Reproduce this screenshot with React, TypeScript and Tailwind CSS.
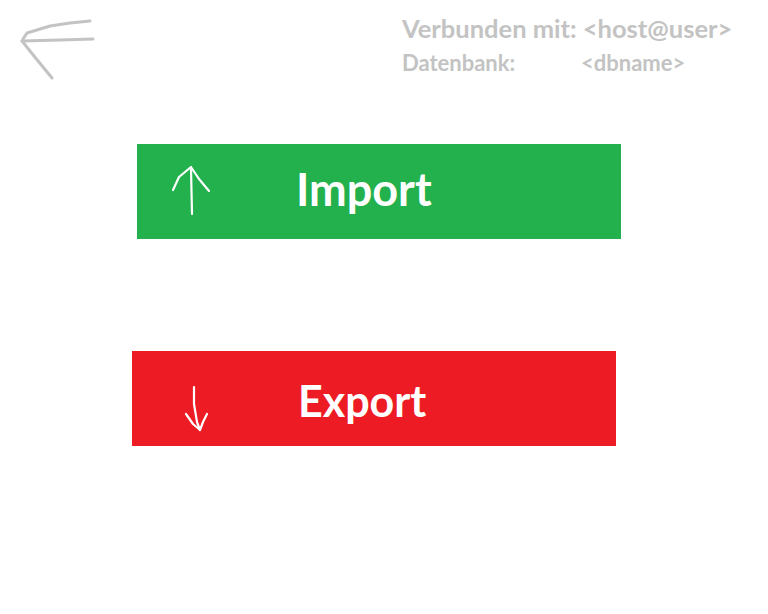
import React from "react";

function BackArrow() {
  return (
    <svg width="100" height="85" viewBox="0 0 100 85" fill="none">
      <g stroke="#c3c3c3" strokeWidth="3" strokeLinecap="round" strokeLinejoin="round">
        <path d="M90 21 L70 23 L50 26 L27 33 L23 39" />
        <path d="M93 39 L60 40 L22 41" />
        <path d="M22 41 L34 56 L52 78" />
      </g>
    </svg>
  );
}

function UpArrow() {
  return (
    <svg width="44" height="54" viewBox="0 0 44 54" fill="none">
      <g stroke="white" strokeWidth="2.2" strokeLinecap="round" strokeLinejoin="round">
        <path d="M20 3 L21 49" />
        <path d="M2 25 L8 12 L20 2 L28 14 L38 26" />
      </g>
    </svg>
  );
}

function DownArrow() {
  return (
    <svg width="30" height="50" viewBox="0 0 30 50" fill="none">
      <g stroke="white" strokeWidth="2.2" strokeLinecap="round" strokeLinejoin="round">
        <path d="M10 3 L10 20 L13 38 L16 46" />
        <path d="M2 30 L9 40 L16 46 L19 38 L23 30" />
      </g>
    </svg>
  );
}

export default function App() {
  return (
    <div
      className="flex h-[614px] w-[768px] flex-col bg-white"
      style={{ fontFamily: "Lato, 'Open Sans', sans-serif" }}
    >
      {/* Header */}
      <div className="flex h-[85px]">
        <BackArrow />
        <div className="ml-[302px] pt-[13px] font-bold text-[#c3c3c3]">
          <p className="text-[25.5px] leading-[30px]">Verbunden mit: &lt;host@user&gt;</p>
          <p className="flex text-[22px] leading-[40px]">
            <span className="w-[179px]">Datenbank:</span>
            <span>&lt;dbname&gt;</span>
          </p>
        </div>
      </div>

      {/* Import */}
      <button className="ml-[137px] mt-[59px] flex h-[95px] w-[484px] items-center bg-[#22b14c] text-white">
        <span className="ml-[34px] flex w-[44px] items-center">
          <UpArrow />
        </span>
        <span className="-mt-[3px] ml-[81px] text-[45px] font-bold">Import</span>
      </button>

      {/* Export */}
      <button className="ml-[132px] mt-[112px] flex h-[95px] w-[484px] items-center bg-[#ed1c24] text-white">
        <span className="ml-[52px] flex w-[30px] items-center pt-[20px]">
          <DownArrow />
        </span>
        <span className="ml-[84px] mt-[6px] text-[43px] font-bold">Export</span>
      </button>
    </div>
  );
}
